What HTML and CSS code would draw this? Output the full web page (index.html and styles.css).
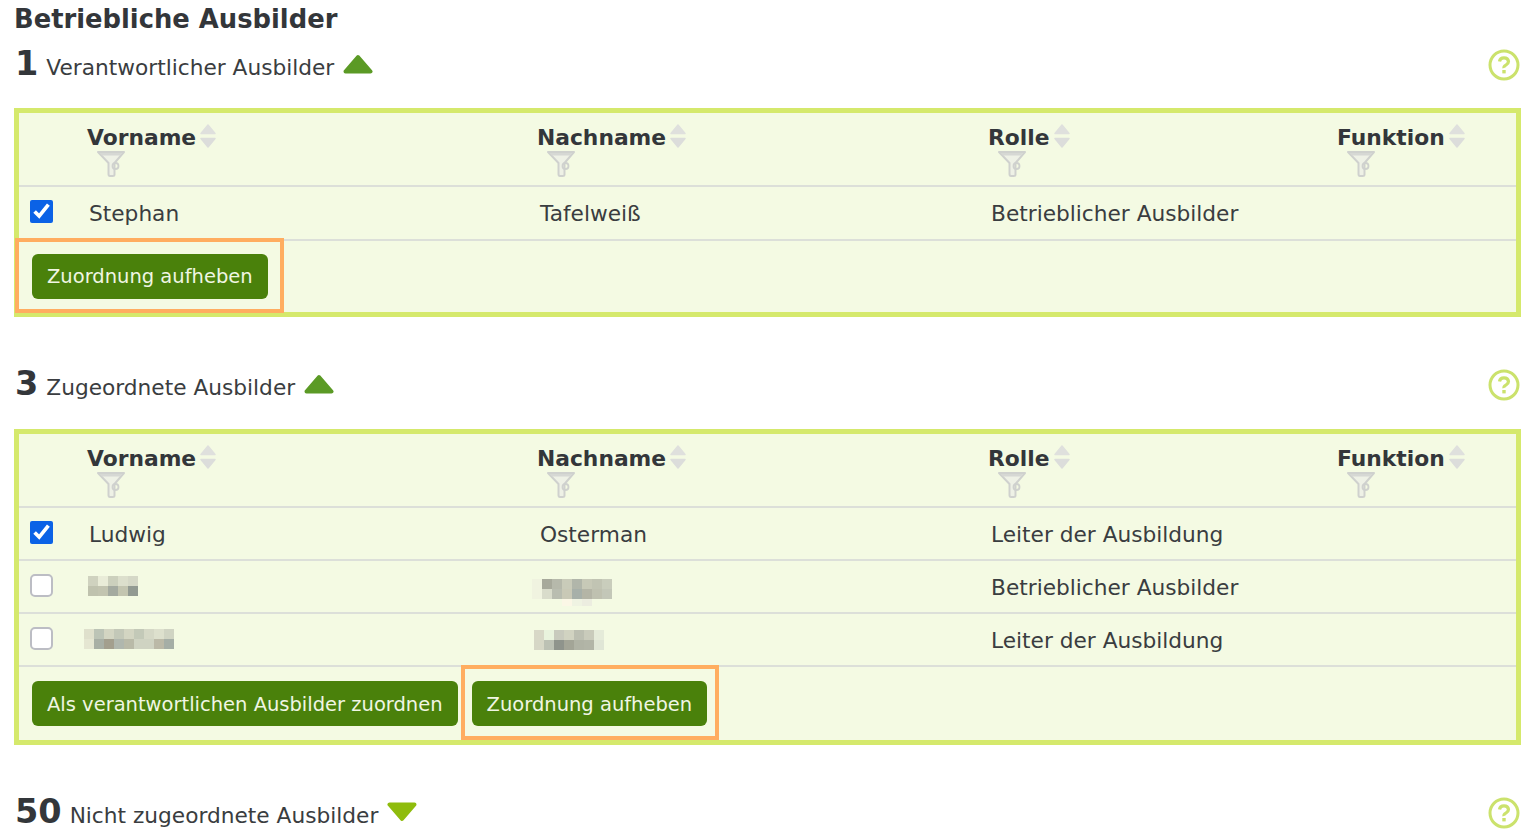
FILE: index.html
```html
<!DOCTYPE html>
<html lang="de">
<head>
<meta charset="utf-8">
<title>Betriebliche Ausbilder</title>
<link rel="stylesheet" href="styles.css">
</head>
<body>
<svg class="defs" width="0" height="0" aria-hidden="true">
  <defs>
    <symbol id="sort" viewBox="0 0 16 24">
      <path d="M8 1 15 9.500H1Z" fill="#dfe0dd" stroke="#dfe0dd" stroke-width="1.500" stroke-linejoin="round"/>
      <path d="M1 14.500H15L8 23Z" fill="#dcdddb" stroke="#dcdddb" stroke-width="1.500" stroke-linejoin="round"/>
    </symbol>
    <symbol id="filter" viewBox="0 0 28 26">
      <path d="M1 1H27L17.500 12V23.500Q17.500 25 15.500 25H13Q11.500 25 11.500 23V12Z" fill="#eef1e6" stroke="#cfd1ce" stroke-width="2" stroke-linejoin="round"/>
      <path d="M3 2H25L23 4.500H5Z" fill="#d6d8d4"/>
      <circle cx="18.500" cy="15" r="3" fill="none" stroke="#cfd1ce" stroke-width="1.800"/>
    </symbol>
    <symbol id="help" viewBox="0 0 32 32">
      <circle cx="16" cy="16" r="14" fill="#fff" stroke="#cbe26c" stroke-width="3"/>
      <path d="M11.500 12.500Q12 8.800 16 8.800T20.500 12.500Q20.500 14.500 18 16T16 19" fill="none" stroke="#cbe26c" stroke-width="3.200"/>
      <rect x="14.300" y="21" width="3.400" height="3.400" fill="#cbe26c"/>
    </symbol>
  </defs>
</svg>

<main class="page">
  <h1 class="title">Betriebliche Ausbilder</h1>

  <section class="group">
    <header class="group-head">
      <strong class="count">1</strong>
      <span class="group-name">Verantwortlicher Ausbilder</span>
      <svg class="toggle" viewBox="0 0 30 20"><path d="M15 3 27.500 17.500H2.500Z" fill="#5b9a25" stroke="#5b9a25" stroke-width="4" stroke-linejoin="round"/></svg>
      <svg class="help"><use href="#help"/></svg>
    </header>
    <div class="panel">
      <table class="grid">
        <colgroup><col class="c0"><col class="c1"><col class="c2"><col class="c3"><col class="c4"></colgroup>
        <thead>
          <tr>
            <th></th>
            <th><span class="th-label">Vorname<svg class="sort"><use href="#sort"/></svg></span><svg class="filter"><use href="#filter"/></svg></th>
            <th><span class="th-label">Nachname<svg class="sort"><use href="#sort"/></svg></span><svg class="filter"><use href="#filter"/></svg></th>
            <th><span class="th-label">Rolle<svg class="sort"><use href="#sort"/></svg></span><svg class="filter"><use href="#filter"/></svg></th>
            <th><span class="th-label">Funktion<svg class="sort"><use href="#sort"/></svg></span><svg class="filter"><use href="#filter"/></svg></th>
          </tr>
        </thead>
        <tbody>
          <tr class="row-a">
            <td class="check"><input type="checkbox" checked></td>
            <td>Stephan</td><td class="wide">Tafelweiß</td><td class="wide">Betrieblicher Ausbilder</td><td></td>
          </tr>
        </tbody>
      </table>
      <div class="actions">
        <div class="marked first"><button class="btn" type="button">Zuordnung aufheben</button></div>
      </div>
    </div>
  </section>

  <section class="group second">
    <header class="group-head">
      <strong class="count">3</strong>
      <span class="group-name">Zugeordnete Ausbilder</span>
      <svg class="toggle" viewBox="0 0 30 20"><path d="M15 3 27.500 17.500H2.500Z" fill="#5b9a25" stroke="#5b9a25" stroke-width="4" stroke-linejoin="round"/></svg>
      <svg class="help"><use href="#help"/></svg>
    </header>
    <div class="panel">
      <table class="grid">
        <colgroup><col class="c0"><col class="c1"><col class="c2"><col class="c3"><col class="c4"></colgroup>
        <thead>
          <tr>
            <th></th>
            <th><span class="th-label">Vorname<svg class="sort"><use href="#sort"/></svg></span><svg class="filter"><use href="#filter"/></svg></th>
            <th><span class="th-label">Nachname<svg class="sort"><use href="#sort"/></svg></span><svg class="filter"><use href="#filter"/></svg></th>
            <th><span class="th-label">Rolle<svg class="sort"><use href="#sort"/></svg></span><svg class="filter"><use href="#filter"/></svg></th>
            <th><span class="th-label">Funktion<svg class="sort"><use href="#sort"/></svg></span><svg class="filter"><use href="#filter"/></svg></th>
          </tr>
        </thead>
        <tbody>
          <tr class="row-b">
            <td class="check"><input type="checkbox" checked></td>
            <td>Ludwig</td><td class="wide">Osterman</td><td class="wide">Leiter der Ausbildung</td><td></td>
          </tr>
          <tr class="row-b">
            <td class="check"><input type="checkbox"></td>
            <td class="blurred">
              <svg class="pix fn-a" width="50" height="20" shape-rendering="crispEdges">
                <rect width="10" height="10" x="0" y="0" fill="#cfd2bf"/><rect width="10" height="10" x="10" y="0" fill="#e9ecd8"/><rect width="10" height="10" x="20" y="0" fill="#ccd0bd"/><rect width="10" height="10" x="30" y="0" fill="#dcdfcc"/><rect width="10" height="10" x="40" y="0" fill="#d5d8c7"/>
                <rect width="10" height="10" x="0" y="10" fill="#bfc2ae"/><rect width="10" height="10" x="10" y="10" fill="#c2c4b0"/><rect width="10" height="10" x="20" y="10" fill="#a4aaa0"/><rect width="10" height="10" x="30" y="10" fill="#c3c5b0"/><rect width="10" height="10" x="40" y="10" fill="#929a92"/>
              </svg>
            </td>
            <td class="blurred">
              <svg class="pix ln-a" width="80" height="27" shape-rendering="crispEdges">
                <rect width="10" height="10" x="0" y="0" fill="#f0f3e0"/><rect width="10" height="10" x="10" y="0" fill="#a7a99b"/><rect width="10" height="10" x="20" y="0" fill="#b6b9ab"/><rect width="10" height="10" x="30" y="0" fill="#c9cbb9"/><rect width="10" height="10" x="40" y="0" fill="#b1b6aa"/><rect width="10" height="10" x="50" y="0" fill="#c7c9b7"/><rect width="10" height="10" x="60" y="0" fill="#c1c4b3"/><rect width="10" height="10" x="70" y="0" fill="#c9cdbc"/>
                <rect width="10" height="10" x="0" y="10" fill="#f0f3e0"/><rect width="10" height="10" x="10" y="10" fill="#d9dccb"/><rect width="10" height="10" x="20" y="10" fill="#b9bdb0"/><rect width="10" height="10" x="30" y="10" fill="#c9c9b6"/><rect width="10" height="10" x="40" y="10" fill="#a7b0a9"/><rect width="10" height="10" x="50" y="10" fill="#b4b5a6"/><rect width="10" height="10" x="60" y="10" fill="#bfc1b0"/><rect width="10" height="10" x="70" y="10" fill="#c3c7b8"/>
                <rect width="10" height="7" x="30" y="20" fill="#fbf7e6"/><rect width="10" height="7" x="40" y="20" fill="#eff3e2"/><rect width="10" height="7" x="50" y="20" fill="#ecede0"/>
              </svg>
            </td>
            <td class="wide">Betrieblicher Ausbilder</td><td></td>
          </tr>
          <tr class="row-b">
            <td class="check"><input type="checkbox"></td>
            <td class="blurred">
              <svg class="pix fn-b" width="90" height="20" shape-rendering="crispEdges">
                <rect width="10" height="10" x="0" y="0" fill="#dfe0cc"/><rect width="10" height="10" x="10" y="0" fill="#bcc4b6"/><rect width="10" height="10" x="20" y="0" fill="#d3d5c2"/><rect width="10" height="10" x="30" y="0" fill="#c3c8b8"/><rect width="10" height="10" x="40" y="0" fill="#d3d5c2"/><rect width="10" height="10" x="50" y="0" fill="#c3c9b8"/><rect width="10" height="10" x="60" y="0" fill="#d5d8c6"/><rect width="10" height="10" x="70" y="0" fill="#dde0cd"/><rect width="10" height="10" x="80" y="0" fill="#d0d4c3"/>
                <rect width="10" height="10" x="0" y="10" fill="#e5e6d2"/><rect width="10" height="10" x="10" y="10" fill="#a8afa5"/><rect width="10" height="10" x="20" y="10" fill="#a39f8e"/><rect width="10" height="10" x="30" y="10" fill="#b0b7ae"/><rect width="10" height="10" x="40" y="10" fill="#b9baa8"/><rect width="10" height="10" x="50" y="10" fill="#cfd3c2"/><rect width="10" height="10" x="60" y="10" fill="#cfd3c2"/><rect width="10" height="10" x="70" y="10" fill="#bbb9a7"/><rect width="10" height="10" x="80" y="10" fill="#a5aea6"/>
              </svg>
            </td>
            <td class="blurred">
              <svg class="pix ln-b" width="70" height="20" shape-rendering="crispEdges">
                <rect width="10" height="10" x="0" y="0" fill="#d8d8c7"/><rect width="10" height="10" x="10" y="0" fill="#e9f3dd"/><rect width="10" height="10" x="20" y="0" fill="#c8cabd"/><rect width="10" height="10" x="30" y="0" fill="#d1d3c1"/><rect width="10" height="10" x="40" y="0" fill="#bcbfb1"/><rect width="10" height="10" x="50" y="0" fill="#c9cbbb"/><rect width="10" height="10" x="60" y="0" fill="#e5ebd9"/>
                <rect width="10" height="10" x="0" y="10" fill="#d6d7c6"/><rect width="10" height="10" x="10" y="10" fill="#bcc1b4"/><rect width="10" height="10" x="20" y="10" fill="#8f948c"/><rect width="10" height="10" x="30" y="10" fill="#a3a597"/><rect width="10" height="10" x="40" y="10" fill="#b0b3a5"/><rect width="10" height="10" x="50" y="10" fill="#b2b5a7"/><rect width="10" height="10" x="60" y="10" fill="#e0e6d6"/>
              </svg>
            </td>
            <td class="wide">Leiter der Ausbildung</td><td></td>
          </tr>
        </tbody>
      </table>
      <div class="actions with-lead">
        <button class="btn lead" type="button">Als verantwortlichen Ausbilder zuordnen</button>
        <div class="marked"><button class="btn" type="button">Zuordnung aufheben</button></div>
      </div>
    </div>
  </section>

  <section class="group third">
    <header class="group-head">
      <strong class="count">50</strong>
      <span class="group-name">Nicht zugeordnete Ausbilder</span>
      <svg class="toggle" viewBox="0 0 30 20"><path d="M2.500 2.500H27.500L15 17Z" fill="#8fbc0d" stroke="#8fbc0d" stroke-width="4" stroke-linejoin="round"/></svg>
      <svg class="help"><use href="#help"/></svg>
    </header>
  </section>
</main>
</body>
</html>
```
FILE: styles.css
```css
* { box-sizing: border-box; }
html, body { margin: 0; padding: 0; background: #fff; overflow: hidden; }
body {
  font-family: "DejaVu Sans", sans-serif;
  font-size: 21.700px;
  color: #3a3d40;
}
.defs { display: block; height: 0; }
.page { padding: 0 13px 0 14px; height: 833px; overflow: hidden; }

.title {
  margin: 0;
  padding-top: 2px;
  height: 37px;
  line-height: 34px;
  font-size: 25.800px;
  font-weight: 700;
  color: #33363a;
}

.group-head {
  display: flex;
  align-items: baseline;
  height: 52px;
  padding-left: 1px;
  padding-top: 4px;
}
.count {
  font-size: 33.500px;
  line-height: 46px;
  font-weight: 700;
  color: #33363a;
  margin-right: 8px;
}
.group-name { line-height: 46px; }
.toggle {
  width: 30px;
  height: 20px;
  margin-left: 9px;
  align-self: flex-start;
  margin-top: 13px;
}
.help {
  width: 32px;
  height: 32px;
  margin-left: auto;
  align-self: flex-start;
  margin-top: 8px;
  margin-right: 1px;
}

.second { margin-top: 40px; }
.second .group-head { height: 72px; }
.third { margin-top: 40px; }

.panel {
  width: 1507px;
  margin-top: 19px;
  border: 5px solid #d5e96c;
  background: #f4fae3;
}
.second .panel { margin-top: 0; }

.grid {
  width: 100%;
  table-layout: fixed;
  border-collapse: collapse;
}
.c0 { width: 53px; }
.c1 { width: 450px; }
.c2 { width: 451px; }
.c3 { width: 349px; }

th {
  height: 73px;
  padding: 11px 0 0 15px;
  text-align: left;
  vertical-align: top;
  font-size: 21.800px;
  font-weight: 700;
  color: #33363a;
}
.th-label { display: flex; align-items: flex-start; line-height: 27px; height: 27px; }
.sort { width: 16px; height: 24px; margin: 0 0 0 4px; flex: none; }
.filter { display: block; width: 28px; height: 26px; margin-left: 10px; }

thead tr { border-bottom: 2px solid #dcdfd9; }
tbody tr { border-bottom: 2px solid #dcdfd9; }
.row-a { height: 54px; }
.row-b { height: 53px; }

td {
  padding: 0 0 0 17px;
  vertical-align: middle;
  white-space: nowrap;
}
td.wide { padding-left: 18px; }
.row-b td { padding-top: 2px; }
td.check { padding: 0 0 4px 11px; line-height: 0; }
.row-b td.check { padding: 0 0 2px 11px; }
.row-b td.blurred { padding: 0; line-height: 0; }
input[type="checkbox"] {
  display: block;
  width: 23px;
  height: 23px;
  margin: 0;
  accent-color: #0b62e6;
}
input[type="checkbox"]:not(:checked) {
  appearance: none;
  background: #fff;
  border: 2px solid #bcbdc4;
  border-radius: 5px;
}

.pix { display: block; }
.fn-a { margin: -2px 0 0 16px; }
.fn-b { margin: -1px 0 0 12px; }
.ln-a { margin: 12px 0 0 10px; }
.ln-b { margin: 0 0 0 12px; }

.actions {
  display: flex;
  height: 71px;
}
.with-lead { height: 73px; padding-left: 13px; }
.marked {
  display: flex;
  align-items: flex-start;
  border: 4px solid #ffad60;
  padding: 12px 12px 10px 13px;
  height: 75px;
  margin-top: -3px;
  margin-left: -4px;
}
.with-lead .marked { margin-top: -2px; margin-left: 3px; padding: 12px 8px 10px 7px; }
.btn {
  height: 45px;
  padding: 0 15px;
  border: 0;
  border-radius: 6px;
  background: #4a810b;
  color: #f0f6e3;
  font-family: "DejaVu Sans", sans-serif;
  font-size: 19.500px;
  white-space: nowrap;
}
.with-lead .btn { padding-top: 2px; }
.lead { margin-top: 14px; }
```
